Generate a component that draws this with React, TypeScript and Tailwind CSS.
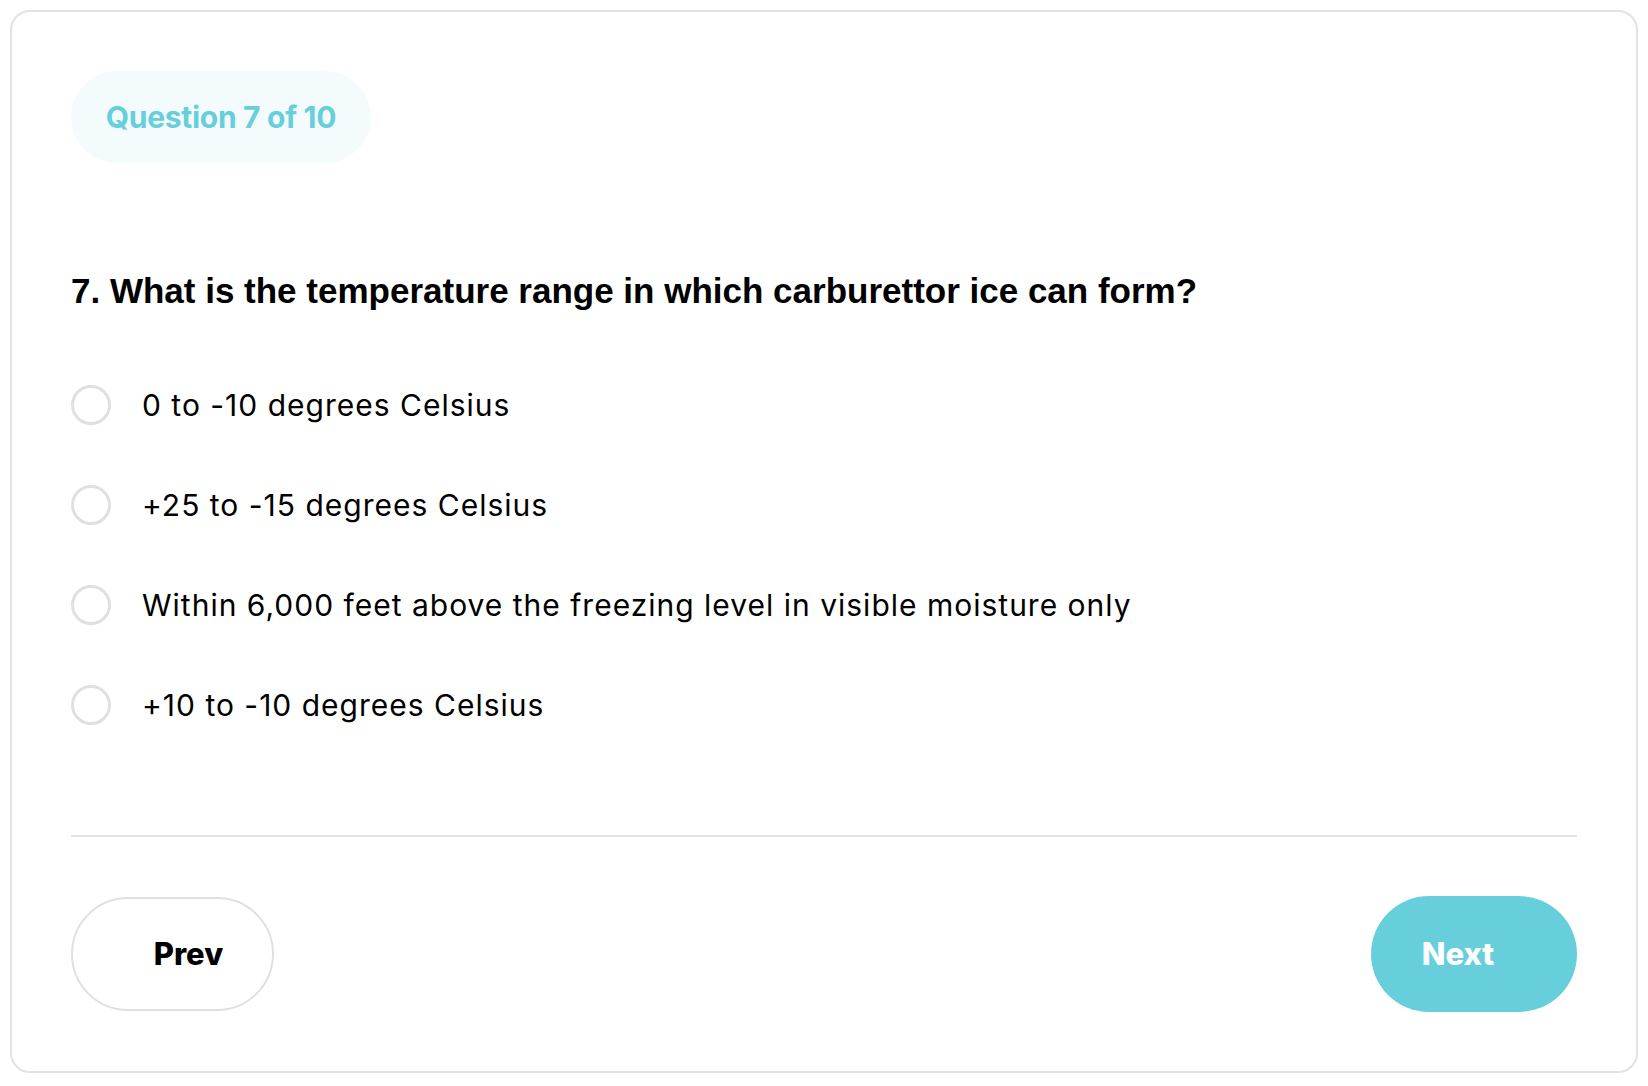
import { useState } from 'react';

/* ── Data ───────────────────────────────────────────────── */
const OPTIONS = [
  '0 to -10 degrees Celsius',
  '+25 to -15 degrees Celsius',
  'Within 6,000 feet above the freezing level in visible moisture only',
  '+10 to -10 degrees Celsius',
];

const UI_FONT = 'font-["Inter","Noto_Sans",sans-serif]';

/* ── Quiz card ──────────────────────────────────────────── */
export default function App() {
  const [selected, setSelected] = useState<number | null>(null);

  return (
    <div className="min-h-[1086px] bg-white pt-[10px] pb-[13px] px-[10px]">
      <div className="border-2 border-[#e2e2e2] rounded-[20px] px-[59px] pt-[59px] pb-[59px] bg-white">
        <div
          className={`inline-flex items-center justify-center w-[300px] h-[92px] rounded-full bg-[#f4fbfc] text-[#67cfdc] text-[30px] font-bold tracking-[-0.3px] ${UI_FONT}`}
        >
          Question 7 of 10
        </div>

        <h2 className='mt-[108px] text-[35px] leading-[40px] font-bold text-black font-["Liberation_Sans","Arial",sans-serif]'>
          7. What is the temperature range in which carburettor ice can form?
        </h2>

        <div className="mt-[74px] flex flex-col gap-[60px]">
          {OPTIONS.map((opt, i) => (
            <label
              key={opt}
              className="flex items-center gap-[31px] cursor-pointer"
              onClick={() => setSelected(i)}
            >
              <span
                className={`w-[40px] h-[40px] rounded-full border-[3px] shrink-0 ${
                  selected === i ? 'border-[#67cfdc]' : 'border-[#e0e0e0]'
                }`}
              />
              <span className={`text-[30px] leading-[40px] tracking-[1px] text-black ${UI_FONT}`}>{opt}</span>
            </label>
          ))}
        </div>

        <div className="mt-[110px] h-[2px] bg-[#e3e3e6]" />

        <div className="mt-[59px] flex justify-between items-center">
          <button
            className={`w-[203px] h-[114px] rounded-full border-2 border-[#e0e0e0] bg-white flex items-center justify-center pl-[32px] text-[31px] font-extrabold text-black ${UI_FONT}`}
          >
            Prev
          </button>
          <button
            className={`w-[206px] h-[116px] rounded-full bg-[#67cfdc] flex items-center justify-center pr-[32px] text-[31px] font-extrabold text-white ${UI_FONT}`}
          >
            Next
          </button>
        </div>
      </div>
    </div>
  );
}
